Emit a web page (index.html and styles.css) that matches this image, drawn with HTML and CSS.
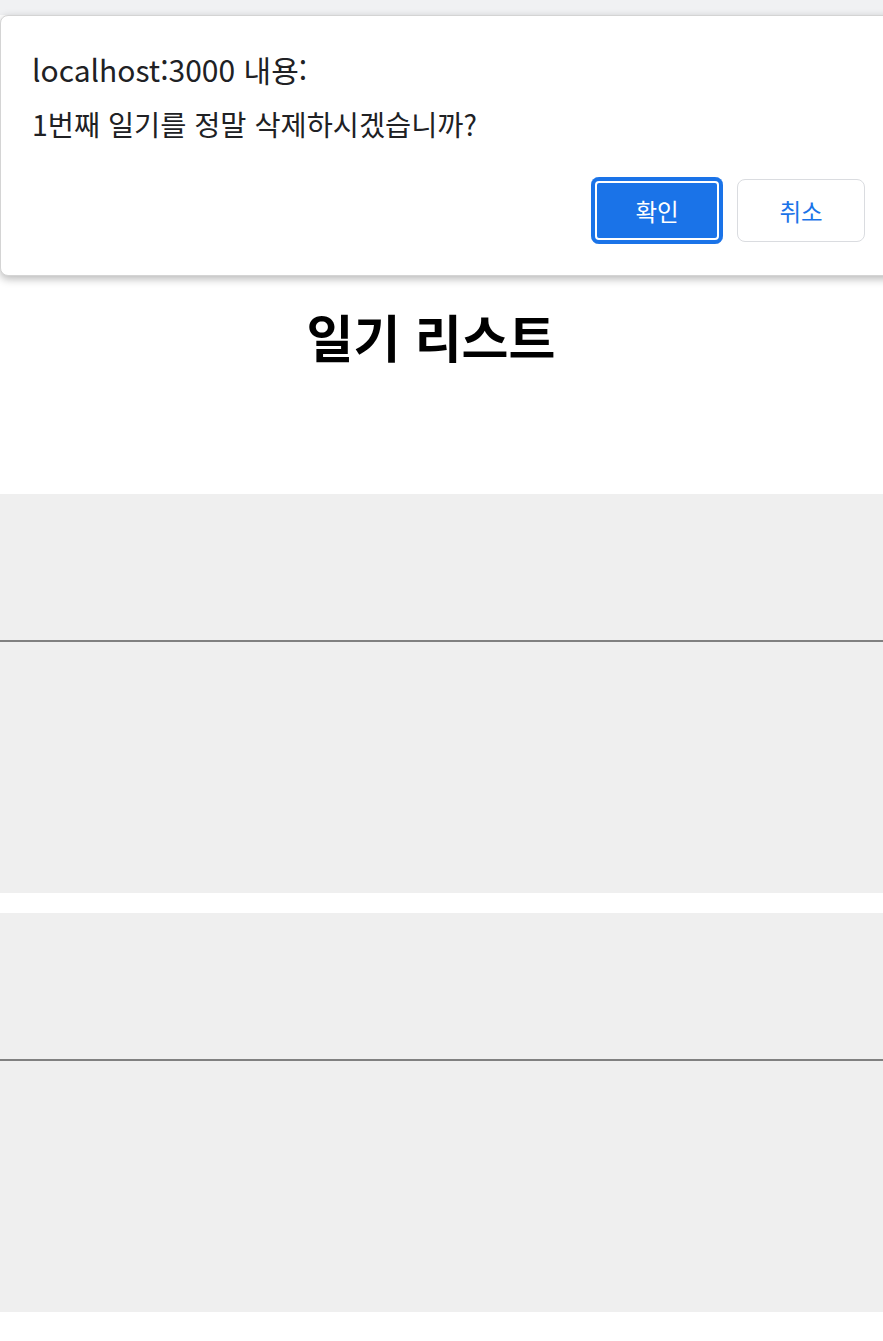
FILE: index.html
```html
<!DOCTYPE html>
<html lang="ko">
<head>
<meta charset="utf-8">
<title>일기 리스트</title>
<link rel="stylesheet" href="styles.css">
</head>
<body>
<div class="top-strip"></div>
<main class="page">
  <h2 class="list-title">일기 리스트</h2>
  <div class="diary-list">
    <div class="diary-item">
      <hr class="divider">
    </div>
    <div class="diary-item">
      <hr class="divider">
    </div>
  </div>
</main>
<div class="dialog" role="dialog">
  <div class="dialog-title">localhost:3000 내용:</div>
  <div class="dialog-message">1번째 일기를 정말 삭제하시겠습니까?</div>
  <div class="dialog-buttons">
    <button class="btn btn-ok">확인</button>
    <button class="btn btn-cancel">취소</button>
  </div>
</div>
</body>
</html>
```
FILE: styles.css
```css
html, body {
  margin: 0;
  padding: 0;
  overflow: hidden;
  background: #ffffff;
}
body {
  font-family: "Noto Sans CJK KR", "Noto Sans", sans-serif;
  height: 1341px;
  position: relative;
}
.top-strip {
  height: 15px;
  background: #f0f1f3;
}
.page {
  padding-top: 290px;
}
.list-title {
  margin: 0 0 127px;
  padding-right: 21px;
  text-align: center;
  font-size: 51px;
  line-height: 62px;
  font-weight: 700;
  color: #000;
}
.diary-list {
  display: flex;
  flex-direction: column;
  gap: 20px;
}
.diary-item {
  background: #efefef;
  height: 399px;
  padding-top: 146px;
  box-sizing: border-box;
}
.divider {
  margin: 0;
  border: none;
  height: 2px;
  background: #808080;
}
.dialog {
  position: absolute;
  top: 15px;
  left: 0;
  width: 899px;
  height: 261px;
  box-sizing: border-box;
  padding: 33px 33px 0 31px;
  background: #fff;
  border: 1px solid #d4d4d4;
  border-radius: 8px;
  box-shadow: 0 3px 8px rgba(0, 0, 0, 0.28);
  color: #202124;
}
.dialog-title {
  font-size: 30px;
  line-height: 40px;
}
.dialog-message {
  margin-top: 16px;
  font-size: 28.4px;
  line-height: 38px;
}
.dialog-buttons {
  display: flex;
  justify-content: flex-end;
  align-items: center;
  gap: 14px;
  margin-top: 34px;
}
.btn {
  font-family: "Noto Sans CJK KR", "Noto Sans", sans-serif;
  font-size: 23.5px;
  border-radius: 8px;
  cursor: pointer;
  padding: 0;
}
.btn-ok {
  width: 132px;
  height: 67px;
  background: #1a73e8;
  color: #fff;
  border: none;
  box-shadow: inset 0 0 0 4px #1a73e8, inset 0 0 0 6px #ffffff;
}
.btn-cancel {
  width: 128px;
  height: 63px;
  background: #fff;
  color: #1a73e8;
  border: 1px solid #dadce0;
}
```
